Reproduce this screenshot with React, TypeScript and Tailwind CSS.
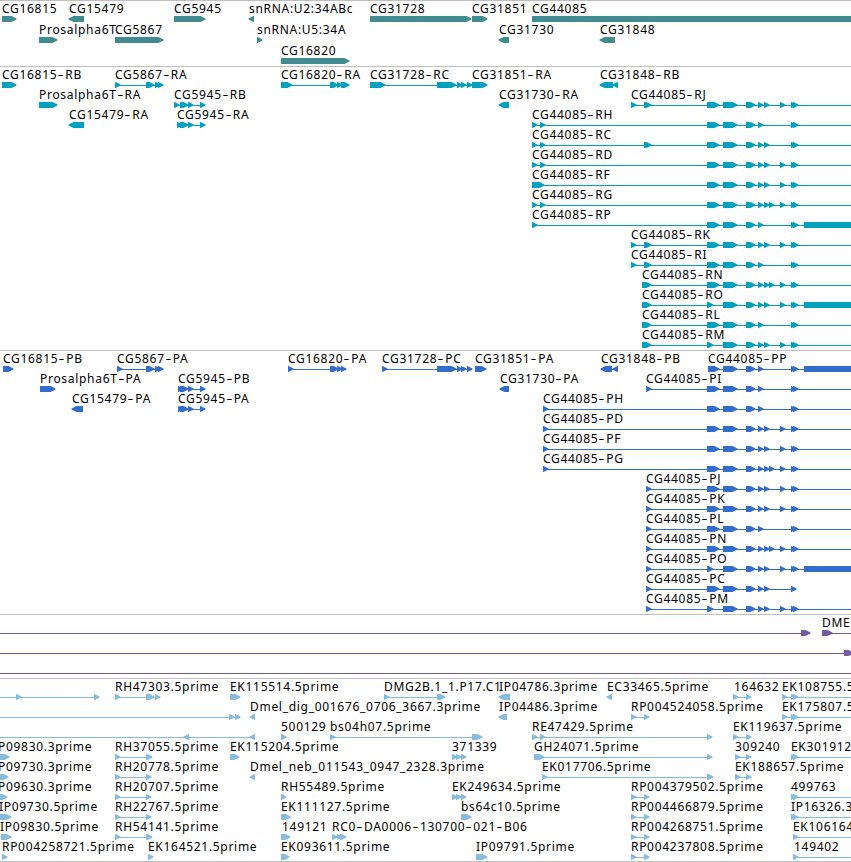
import React from 'react';

// [start, end] of an exon, in pixels along the region
type Exon = [number, number];

interface Feature {
  name?: string;
  labelAt?: number;
  exons: Exon[];
  reverse?: boolean;
  from?: number;
  to?: number;
}

interface TrackData {
  id: string;
  color: string;
  rowClass: string;
  rows: Feature[][];
}

const EDGE = 870;
const HEAD = 4.5;

const f = (name: string, exons: Exon[], extra: Partial<Feature> = {}): Feature => ({ name, exons, ...extra });
const rev = { reverse: true };
const open = { to: EDGE };

// Exons shared by the CG44085 isoforms
const shared: Record<string, Exon[]> = {
  A: [[707, 719]],
  a: [[707, 713]],
  B: [[723, 737]],
  C: [[746, 755]],
  D: [[758, 763]],
  E: [[764, 769]],
  F: [[769, 774]],
  G: [[780, 785]],
  H: [[791, 796], [793, 798]],
  h: [[791, 796]],
  Z: [[804, EDGE]],
};

const iso = (suffix: string, first: Exon[], codes: string, to = EDGE): Feature => ({
  name: `CG44085-${suffix}`,
  exons: [...first, ...codes.split('').flatMap((c) => shared[c])],
  to,
});

const start: Exon[] = [[532, 537], [540, 545]];
const mid: Exon[] = [[631, 636], [644, 651]];
const late: Exon[] = [[642, 651]];
const cds: Exon[] = [[543, 548]];
const lateCds: Exon[] = [[646, 651]];
const rp: Exon[] = [[631, 636], [644, 649]];
const rh: Exon[] = [[115, 120], [146, 151]];
const ek: Exon[] = [[735, 740], [746, 751]];

const tracks: TrackData[] = [
  {
    id: 'genes',
    color: '#408c91',
    rowClass: 'h-[21px]',
    rows: [
      [
        f('CG16815', [[2, 16]]),
        f('CG15479', [[69, 84]], rev),
        f('CG5945', [[174, 205]]),
        f('snRNA:U2:34ABc', [[249, 254]], rev),
        f('CG31728', [[370, 471]]),
        f('CG31851', [[472, 487]]),
        f('CG44085', [[532, EDGE]]),
      ],
      [
        f('Prosalpha6T', [[39, 57]]),
        f('CG5867', [[115, 163]]),
        f('snRNA:U5:34A', [[257, 262]]),
        f('CG31730', [[499, 509]], rev),
        f('CG31848', [[600, 615]], rev),
      ],
      [f('CG16820', [[281, 349]])],
    ],
  },
  {
    id: 'transcripts',
    color: '#00a0c0',
    rowClass: 'h-5',
    rows: [
      [
        f('CG16815-RB', [[2, 16]]),
        f('CG5867-RA', [[115, 120], [146, 154], [155, 160], [158, 163]]),
        f('CG16820-RA', [[281, 292], [330, 338], [337, 342], [341, 349]]),
        f('CG31728-RC', [[370, 385], [437, 456], [457, 462], [461, 466], [467, 472]]),
        f('CG31851-RA', [[472, 487]]),
        f('CG31848-RB', [[600, 613], [613, 618]], rev),
      ],
      [
        f('Prosalpha6T-RA', [[39, 57]]),
        f('CG5945-RB', [[174, 179], [180, 188], [188, 193], [200, 205]]),
        f('CG31730-RA', [[499, 509]], rev),
        iso('RJ', mid, 'ABCDEGH'),
      ],
      [
        f('CG15479-RA', [[69, 84]], rev),
        f('CG5945-RA', [[177, 182], [180, 188], [188, 193], [200, 205]]),
        iso('RH', start, 'ABCDH'),
      ],
      [iso('RC', [...start, [644, 651]], 'ABCDEH')],
      [iso('RD', start, 'ABCDEGH')],
      [iso('RF', [[532, 544]], 'ABCDEGH')],
      [iso('RG', start, 'ABCDEFGH')],
      [iso('RP', [[532, 537]], 'ABCDHZ')],
      [iso('RK', mid, 'ABCDEGH')],
      [iso('RI', mid, 'ABCDH')],
      [iso('RN', late, 'ABCDEFGH')],
      [iso('RO', late, 'aBCDEGHZ')],
      [iso('RL', late, 'ABCDH')],
      [iso('RM', late, 'aBCDEGH')],
    ],
  },
  {
    id: 'proteins',
    color: '#326ccc',
    rowClass: 'h-5',
    rows: [
      [
        f('CG16815-PB', [[3, 13]]),
        f('CG5867-PA', [[117, 122], [146, 154], [155, 160], [158, 163]]),
        f('CG16820-PA', [[288, 293], [330, 338], [337, 342], [341, 346]]),
        f('CG31728-PC', [[382, 387], [437, 456], [457, 462], [461, 466], [467, 472]]),
        f('CG31851-PA', [[475, 486]]),
        f('CG31848-PB', [[601, 612], [613, 618]], rev),
        iso('PP', [[708, 719]], 'BCDHZ'),
      ],
      [
        f('Prosalpha6T-PA', [[40, 55]]),
        f('CG5945-PB', [[178, 183], [180, 188], [188, 193], [200, 205]]),
        f('CG31730-PA', [[500, 509]], rev),
        iso('PI', lateCds, 'ABCDH'),
      ],
      [
        f('CG15479-PA', [[72, 83]], rev),
        f('CG5945-PA', [[178, 183], [180, 188], [188, 193], [200, 205]]),
        iso('PH', cds, 'ABCDH'),
      ],
      [iso('PD', cds, 'ABCDEGH')],
      [iso('PF', cds, 'ABCDEGH')],
      [iso('PG', cds, 'ABCDEFGH')],
      [iso('PJ', lateCds, 'ABCDEGH')],
      [iso('PK', lateCds, 'ABCDEGH')],
      [iso('PL', lateCds, 'ABCDH')],
      [iso('PN', lateCds, 'ABCDEFGH')],
      [iso('PO', lateCds, 'aBCDEGHZ')],
      [iso('PC', lateCds, 'ABCDEh', 796)],
      [iso('PM', lateCds, 'aBCDEGH')],
    ],
  },
  {
    id: 'cdna',
    color: '#7359a6',
    rowClass: 'h-5',
    rows: [
      [{ exons: [[801, 810]], from: 0 }, f('DME1', [[822, 832]], open)],
      [{ exons: [[844, 853]], from: 0 }],
      [{ exons: [], from: 0, to: EDGE }],
    ],
  },
  {
    id: 'ests',
    color: '#87bcde',
    rowClass: 'h-5',
    rows: [
      [
        { exons: [[16, 21], [94, 99]], from: 0 },
        f('RH47303.5prime', [[115, 120], [146, 154], [155, 160]]),
        f('EK115514.5prime', [[230, 240]]),
        f('DMG2B.1_1.P17.C1', [[384, 389], [437, 445]]),
        f('IP04786.3prime', [[499, 510]], rev),
        f('EC33465.5prime', [[607, 612]], rev),
        f('164632', [[733, 738], [746, 751]], { labelAt: 734 }),
        f('EK108755.5prime', [[782, 787], [791, 796], [793, 798]], open),
      ],
      [
        { exons: [[229, 234], [235, 240]], from: 0 },
        f('Dmel_dig_001676_0706_3667.3prime', [[250, 255]], rev),
        f('IP04486.3prime', [[499, 507]], rev),
        f('RP004524058.5prime', rp),
        f('EK175807.5prime', [[782, 787], [791, 796], [793, 798]], open),
      ],
      [
        { exons: [[184, 189], [250, 255]], from: 0, reverse: true },
        f('500129', [[281, 286]]),
        f('bs04h07.5prime', [[330, 335], [472, 482]]),
        f('RE47429.5prime', [[532, 537], [540, 545], [707, 712]]),
        f('EK119637.5prime', [[733, 738], [746, 751]]),
      ],
      [
        f('P09830.3prime', [[0, 9]], { labelAt: -2 }),
        f('RH37055.5prime', [[115, 120], [146, 152]]),
        f('EK115204.5prime', [[230, 239]]),
        f('371339', [[452, 457], [456, 461], [461, 466]]),
        f('GH24071.5prime', [[534, 544], [707, 712]]),
        f('309240', ek),
        f('EK301912.5prime', [[791, 796], [793, 798]], open),
      ],
      [
        f('P09730.3prime', [[0, 8]], { labelAt: -2 }),
        f('RH20778.5prime', rh),
        f('Dmel_neb_011543_0947_2328.3prime', [[250, 255]], rev),
        f('EK017706.5prime', [[542, 547], [707, 713]]),
        f('EK188657.5prime', ek),
      ],
      [
        f('P09630.3prime', [[0, 7]], { labelAt: -2 }),
        f('RH20707.5prime', rh),
        f('RH55489.5prime', [[281, 286]]),
        f('EK249634.5prime', [[452, 457], [456, 461], [461, 466]]),
        f('RP004379502.5prime', rp),
        f('499763', [[791, 796], [793, 798]], open),
      ],
      [
        f('IP09730.5prime', [[0, 11]], { labelAt: -1 }),
        f('RH22767.5prime', rh),
        f('EK111127.5prime', [[281, 290]]),
        f('bs64c10.5prime', [[461, 471]]),
        f('RP004466879.5prime', rp),
        f('IP16326.3prime', [[791, 796], [793, 798]], open),
      ],
      [
        f('IP09830.5prime', [[1, 11]], { labelAt: 0 }),
        f('RH54141.5prime', [[115, 120], [146, 152]]),
        f('149121', [[281, 290]], { labelAt: 282 }),
        f('RC0-DA0006-130700-021-B06', [[332, 337], [337, 342], [340, 346]]),
        f('RP004268751.5prime', rp),
        f('EK106164.5prime', [[793, 798]], open),
      ],
      [
        f('RP004258721.5prime', [[2, 7]]),
        f('EK164521.5prime', [[148, 153]]),
        f('EK093611.5prime', [[281, 289]]),
        f('IP09791.5prime', [[476, 487]]),
        f('RP004237808.5prime', rp),
        f('149402', [[793, 798]], { ...open, labelAt: 794 }),
      ],
    ],
  },
];

const arrow = ([a, b]: Exon, reverse?: boolean) =>
  reverse
    ? `M${b} 0H${a + HEAD}L${a - 0.5} 2.5V3.5L${a + HEAD} 6H${b}Z`
    : `M${a} 0H${b - HEAD}L${b + 0.5} 2.5V3.5L${b - HEAD} 6H${a}Z`;

const Glyph: React.FC<{ feature: Feature }> = ({ feature }) => {
  const { exons, reverse } = feature;
  const from = feature.from ?? exons[0][0];
  const to = feature.to ?? exons[exons.length - 1][1];
  return (
    <g>
      {(exons.length !== 1 || feature.from !== undefined || feature.to !== undefined) && (
        <rect x={from} y={3} width={to - from} height={1} />
      )}
      {exons.map((exon, i) => (
        <path key={i} d={arrow(exon, reverse)} />
      ))}
    </g>
  );
};

const Label: React.FC<{ feature: Feature }> = ({ feature }) => (
  <span
    className="absolute top-0 whitespace-pre leading-4"
    style={{ left: feature.labelAt ?? feature.exons[0][0] }}
  >
    {feature.name!.split('-').map((part, i) => (
      <React.Fragment key={i}>
        {i > 0 && <span className="inline-block w-[8px] scale-x-150 text-center">-</span>}
        {part}
      </React.Fragment>
    ))}
  </span>
);

const Track: React.FC<{ track: TrackData }> = ({ track }) => (
  <section
    className={`overflow-hidden border-t border-[#bfbfbf] ${
      track.id === 'genes' ? 'pb-[2px]' : track.id === 'ests' ? 'border-b pb-[2px]' : 'pb-[3px]'
    }`}
  >
    {track.rows.map((row, i) => (
      <div key={i} className={`relative ${track.rowClass}`}>
        {row.filter((item) => item.name).map((item) => (
          <Label key={item.name} feature={item} />
        ))}
        <svg className="absolute top-[15px] left-0 h-1.5 w-full" fill={track.color}>
          {row.map((item, j) => (
            <Glyph key={j} feature={item} />
          ))}
        </svg>
      </div>
    ))}
  </section>
);

export default function App() {
  return (
    <main className="h-[862px] w-[851px] overflow-hidden bg-white font-['Noto_Sans',sans-serif] text-[12px] tracking-[0.7px] text-black">
      {tracks.map((track) => (
        <Track key={track.id} track={track} />
      ))}
    </main>
  );
}
